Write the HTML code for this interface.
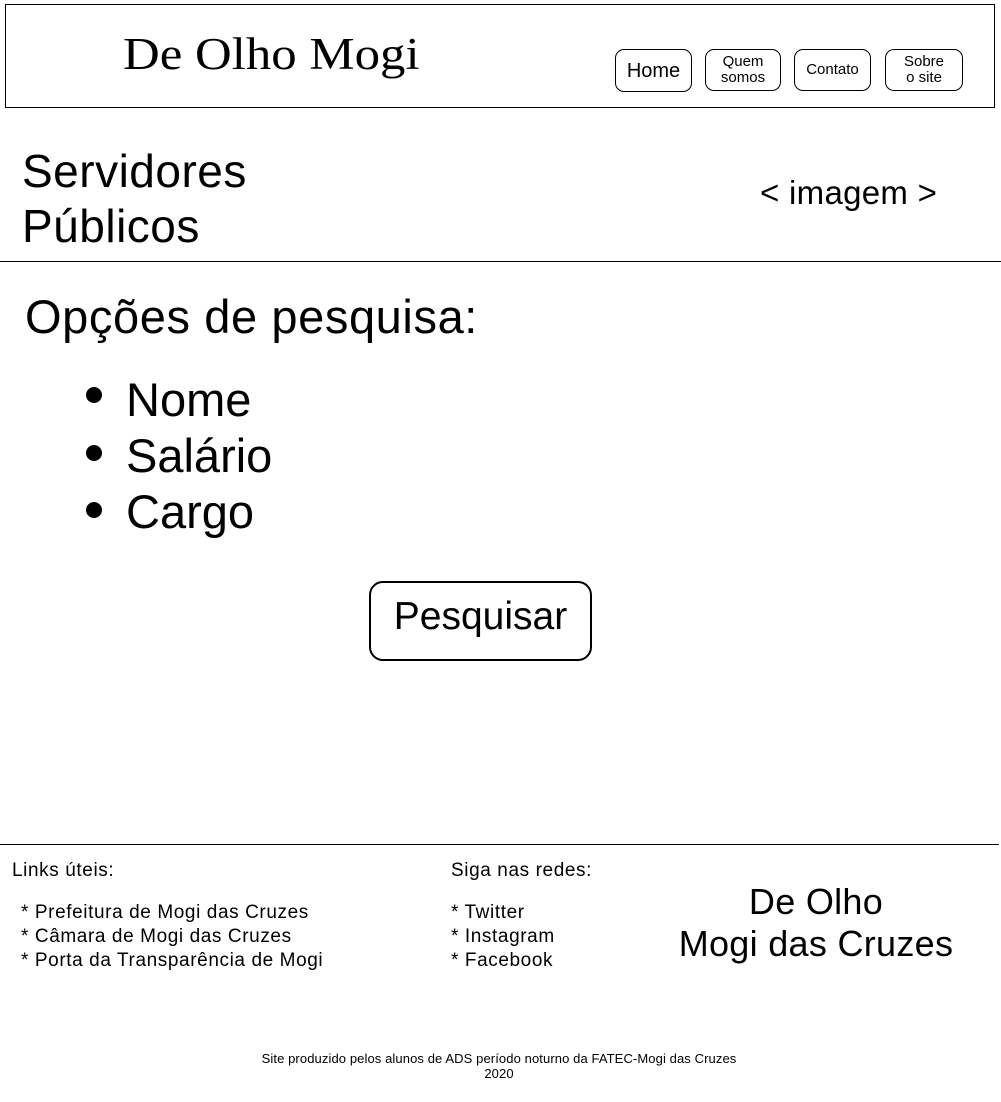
<!DOCTYPE html>
<html><head><meta charset="utf-8"><style>
body{margin:0;width:1001px;height:1102px;background:#fff;position:relative;font-family:"Liberation Sans",sans-serif;color:#000;overflow:hidden}
.a{position:absolute;white-space:nowrap}
.btn{position:absolute;border:1.5px solid #000;border-radius:9px;box-sizing:border-box;text-align:center;line-height:16px;font-size:15px;display:flex;align-items:center;justify-content:center}
.dot{position:absolute;width:16px;height:16px;border-radius:50%;background:#000}
.f{font-size:19px;letter-spacing:0.6px}
</style></head><body>
<div class="a" style="left:5px;top:4px;width:988px;height:102px;border:1.5px solid #000"></div>
<div class="a" style="left:123px;top:28px;font-family:'Liberation Serif',serif;font-size:45px;transform:scaleX(1.13);transform-origin:left top">De Olho Mogi</div>
<div class="btn" style="left:615px;top:49px;width:77px;height:43px;font-size:20px">Home</div>
<div class="btn" style="left:705px;top:49px;width:76px;height:42px;border-width:1px">Quem<br>somos</div>
<div class="btn" style="left:794px;top:49px;width:77px;height:42px">Contato</div>
<div class="btn" style="left:885px;top:49px;width:78px;height:42px">Sobre<br>o site</div>
<div class="a" style="left:22px;top:144px;font-size:46px;line-height:55px;letter-spacing:0.5px">Servidores<br>Públicos</div>
<div class="a" style="left:760px;top:174px;font-size:33px;letter-spacing:0.3px">&lt; imagem &gt;</div>
<div class="a" style="left:0;top:261px;width:1001px;border-top:1.5px solid #000"></div>
<div class="a" style="left:25px;top:289px;font-size:47px;letter-spacing:0.6px">Opções de pesquisa:</div>
<div class="dot" style="left:86px;top:387px"></div>
<div class="dot" style="left:86px;top:445px"></div>
<div class="dot" style="left:86px;top:502px"></div>
<div class="a" style="left:126px;top:372px;font-size:47px;line-height:56px">Nome<br>Salário<br>Cargo</div>
<div class="btn" style="left:369px;top:581px;width:223px;height:80px;font-size:39px;border-radius:14px;border-width:2px;padding-bottom:8px">Pesquisar</div>
<div class="a" style="left:0;top:844px;width:999px;border-top:1.5px solid #000"></div>
<div class="a f" style="left:12px;top:860px">Links úteis:</div>
<div class="a f" style="left:21px;top:901px;line-height:24px">* Prefeitura de Mogi das Cruzes<br>* Câmara de Mogi das Cruzes<br>* Porta da Transparência de Mogi</div>
<div class="a f" style="left:451px;top:860px">Siga nas redes:</div>
<div class="a f" style="left:451px;top:901px;line-height:24px">* Twitter<br>* Instagram<br>* Facebook</div>
<div class="a" style="left:660px;top:881px;width:312px;text-align:center;font-size:36px;line-height:42px;letter-spacing:0.3px">De Olho<br>Mogi das Cruzes</div>
<div class="a" style="left:250px;top:1051px;width:498px;text-align:center;font-size:13px;line-height:15px;letter-spacing:0.1px">Site produzido pelos alunos de ADS período noturno da FATEC-Mogi das Cruzes<br>2020</div>
</body></html>
